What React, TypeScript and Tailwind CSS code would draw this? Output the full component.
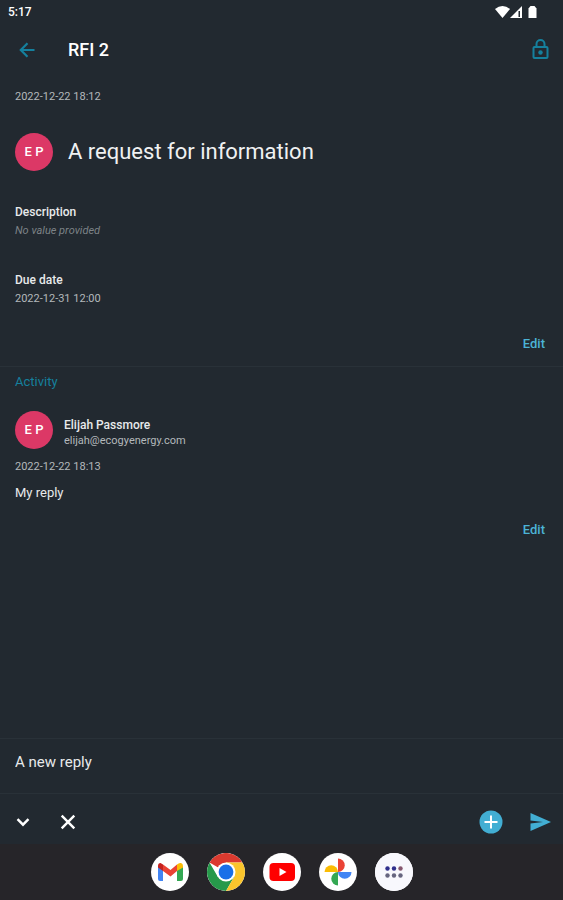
// =============================
// App.tsx
// RFI detail screen with activity and reply box
// =============================

import { ReactNode } from 'react';

function Avatar() {
  return (
    <div className="flex size-[38px] shrink-0 items-center justify-center rounded-full bg-[#dc3866] text-[13px] font-medium text-white">
      E P
    </div>
  );
}

function Field({ label, children }: { label: string; children: ReactNode }) {
  return (
    <div>
      <dt className="mb-[3px] text-xs font-medium text-[#e8eaeb]">{label}</dt>
      <dd className="text-[11px] leading-4 text-[#b3b8bb]">{children}</dd>
    </div>
  );
}

function EditButton() {
  return (
    <div className="flex justify-end px-[18px]">
      <button type="button" className="text-[13px] leading-4 font-medium text-[#4cb3d6]">Edit</button>
    </div>
  );
}

function DockItem({ label, children }: { label: string; children: ReactNode }) {
  return (
    <button type="button" aria-label={label} className="flex size-[38px] items-center justify-center overflow-hidden rounded-full bg-white">
      {children}
    </button>
  );
}

export default function App() {
  return (
    <div className="flex min-h-screen flex-col bg-[#222930] font-[Roboto,sans-serif] text-[#e8eaeb]">
      {/* Status bar */}
      <div className="flex h-6 items-center justify-between pr-[25px] pl-2 text-xs font-medium text-white">
        <span>5:17</span>
        <svg viewBox="0 0 43 14" fill="currentColor" className="h-3.5 w-[43px]" aria-hidden="true">
          <path d="M0 4Q7.500-2 15 4L7.500 13Z" />
          <path d="M15 13L27 1V13Z" />
          <path d="M23.500 6H25V12H23.500Z" fill="#222930" />
          <path d="M33.500 3.500L35.500 1H39.500L41.500 3.500V13H33.500Z" />
        </svg>
      </div>

      {/* App bar */}
      <header className="flex h-[51px] items-center pr-[11px] pl-4">
        <button type="button" aria-label="Back" className="text-[#15809d]">
          <svg viewBox="0 0 22 22" fill="none" stroke="currentColor" strokeWidth="2.200" className="size-[22px]" aria-hidden="true">
            <path d="M18.500 11H5M11.500 4.200L4.800 11l6.700 6.800" />
          </svg>
        </button>
        <h1 className="ml-[30px] flex-1 text-lg font-medium text-white">RFI 2</h1>
        <button type="button" aria-label="Lock" className="text-[#15809d]">
          <svg viewBox="0 0 23 23" fill="none" stroke="currentColor" strokeWidth="2" className="size-[23px]" aria-hidden="true">
            <rect x="4.500" y="9" width="14" height="11" rx="1" />
            <path d="M7.500 9V6a4 4 0 0 1 8 0V9" />
            <circle cx="11.500" cy="14.500" r="2.200" fill="currentColor" stroke="none" />
          </svg>
        </button>
      </header>

      <main className="flex-1">
        {/* Request */}
        <section className="border-b border-[#293138] pt-3.5 pb-3.5">
          <div className="px-[15px]">
            <p className="text-[11px] leading-4 text-[#b3b8bb]">2022-12-22 18:12</p>
            <div className="mt-7 flex items-center gap-[15px]">
              <Avatar />
              <h2 className="text-[22px] leading-7 text-[#f0f1f2]">A request for information</h2>
            </div>
            <dl className="mt-[33px] flex flex-col gap-[33px]">
              <Field label="Description"><em className="text-[#7d8387]">No value provided</em></Field>
              <Field label="Due date">2022-12-31 12:00</Field>
            </dl>
          </div>
          <div className="mt-[29px]">
            <EditButton />
          </div>
        </section>

        {/* Activity */}
        <section className="pt-[7px]">
          <div className="px-[15px]">
            <h3 className="text-[13px] leading-4 text-[#15809d]">Activity</h3>
            <div className="mt-[21px] flex items-center gap-[11px]">
              <Avatar />
              <div className="pt-1.5">
                <p className="text-xs font-medium">Elijah Passmore</p>
                <p className="text-[11px] leading-4 text-[#b3b8bb]">elijah@ecogyenergy.com</p>
              </div>
            </div>
            <p className="mt-2.5 text-[11px] leading-4 text-[#b3b8bb]">2022-12-22 18:13</p>
            <p className="mt-2.5 text-[13px] leading-4">My reply</p>
          </div>
          <div className="mt-[21px]">
            <EditButton />
          </div>
        </section>
      </main>

      {/* Reply box */}
      <form>
        <input
          type="text"
          aria-label="Reply"
          defaultValue="A new reply"
          className="block h-[55px] w-full border-t border-[#293138] px-[15px] pb-2 text-[15px] outline-none"
        />
        <div className="flex h-[51px] items-center border-t border-[#293138] px-[11px] pt-1.5">
          <button type="button" aria-label="Collapse" className="text-white">
            <svg viewBox="0 0 24 24" fill="none" stroke="currentColor" strokeWidth="2.400" className="size-6" aria-hidden="true">
              <path d="M6.500 9.200L12 14.700 17.500 9.200" />
            </svg>
          </button>
          <button type="button" aria-label="Discard" className="ml-[21px] text-white">
            <svg viewBox="0 0 24 24" fill="none" stroke="currentColor" strokeWidth="2.400" className="size-6" aria-hidden="true">
              <path d="M5.700 5.700L18.300 18.300M18.300 5.700L5.700 18.300" />
            </svg>
          </button>
          <button type="button" aria-label="Add attachment" className="ml-auto">
            <svg viewBox="0 0 24 24" className="size-6" aria-hidden="true">
              <circle cx="12" cy="12" r="11.500" fill="#42aed3" />
              <path d="M12 5.500V18.500M5.500 12H18.500" stroke="#fff" strokeWidth="2" />
            </svg>
          </button>
          <button type="submit" aria-label="Send" className="ml-[25px] text-[#42aed3]">
            <svg viewBox="0 0 24 24" fill="currentColor" className="size-6" aria-hidden="true">
              <path d="M2.500 21L23 12 2.500 3V10.400L15 12 2.500 13.600Z" />
            </svg>
          </button>
        </div>
      </form>

      {/* App dock */}
      <nav className="flex h-14 items-center justify-center gap-[18px] bg-[#262529]" aria-label="Apps">
        <DockItem label="Gmail">
          <svg viewBox="0 0 38 38" className="size-full">
            <path d="M7 13V26Q7 28 9 28H12V15Z" fill="#4285f4" />
            <path d="M26 15V28H30Q32 28 32 26V13Z" fill="#34a853" />
            <path d="M12 11.500L19.500 17 26 11.500V18L19.500 23.500 12 18Z" fill="#ea4335" />
            <path d="M7 13Q7 10 9.500 10L12 11.500V18L7 14.500Z" fill="#c5221f" />
            <path d="M26 11.500Q28 9.500 30 10Q32 10.500 32 13V14.500L26 18Z" fill="#fbbc04" />
          </svg>
        </DockItem>
        <DockItem label="Chrome">
          <svg viewBox="0 0 38 38" className="size-full">
            <path d="M19 19L2.500 9.500A19 19 0 0 1 35.500 9.500H19Z" fill="#db3a2f" />
            <path d="M2.500 9.500A19 19 0 0 0 19 38L27.200 23.700 19 19 10.800 23.700Z" fill="#26994a" />
            <path d="M35.500 9.500A19 19 0 0 1 19 38L27.200 23.700 19 19V9.500Z" fill="#fbc52c" />
            <circle cx="19" cy="19" r="9.500" fill="#fff" />
            <circle cx="19" cy="19" r="7.400" fill="#1a6fe8" />
          </svg>
        </DockItem>
        <DockItem label="YouTube">
          <svg viewBox="0 0 38 38" className="size-full">
            <rect x="6.500" y="10" width="25.500" height="18" rx="4" fill="#f00" />
            <path d="M16.500 15L23.500 19 16.500 23Z" fill="#fff" />
          </svg>
        </DockItem>
        <DockItem label="Photos">
          <svg viewBox="0 0 38 38" className="size-full">
            <path d="M19 19V5.500A6.700 6.700 0 0 1 19 19Z" fill="#ea4335" />
            <path d="M19 19H32.500A6.700 6.700 0 0 1 19 19Z" fill="#4285f4" />
            <path d="M19 19V32.500A6.700 6.700 0 0 1 19 19Z" fill="#34a853" />
            <path d="M19 19H5.500A6.700 6.700 0 0 1 19 19Z" fill="#fbbc04" />
          </svg>
        </DockItem>
        <DockItem label="All apps">
          <svg viewBox="0 0 38 38" className="size-full">
            <rect width="38" height="38" fill="#f8f8fd" />
            <g fill="#30308c">
              <circle cx="12.500" cy="15.500" r="2.200" />
              <circle cx="19" cy="15.500" r="2.200" />
            </g>
            <circle cx="25.500" cy="15.500" r="2.200" fill="#86586f" />
            <g fill="#66657f">
              <circle cx="12.500" cy="22.500" r="2.200" />
              <circle cx="19" cy="22.500" r="2.200" />
              <circle cx="25.500" cy="22.500" r="2.200" />
            </g>
          </svg>
        </DockItem>
      </nav>
    </div>
  );
}
